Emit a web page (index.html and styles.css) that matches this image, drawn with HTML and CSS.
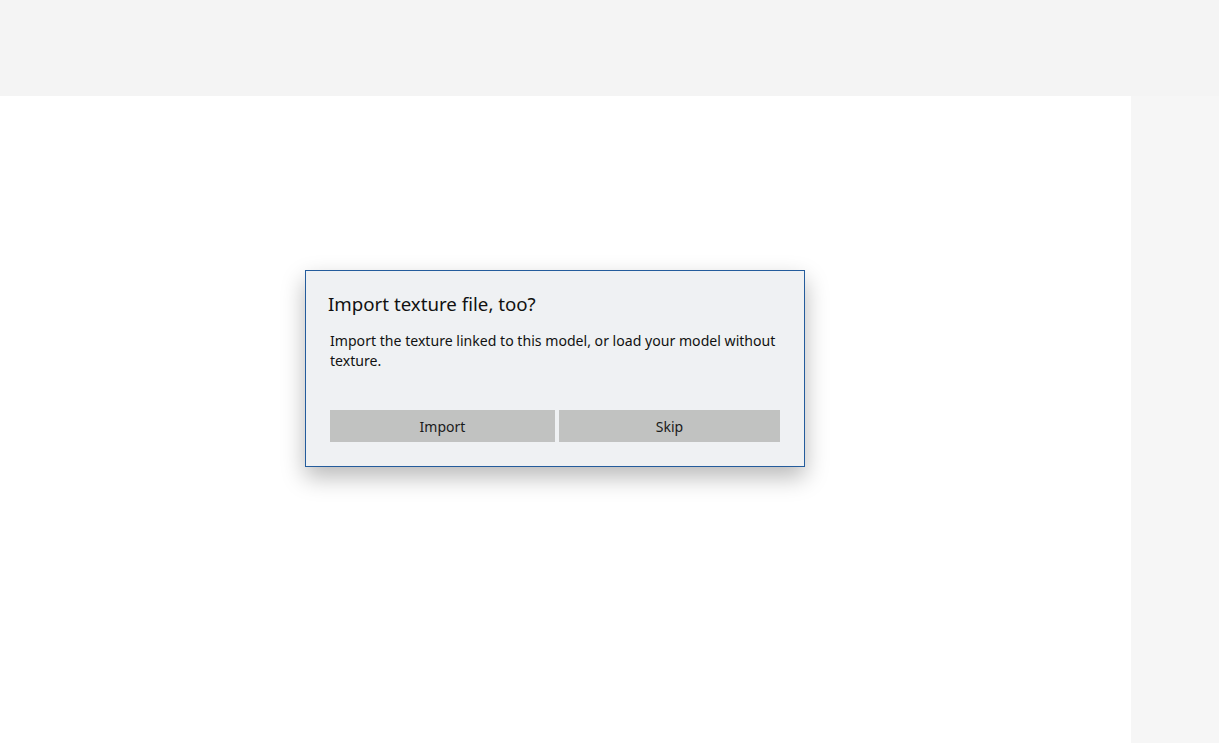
FILE: index.html
```html
<!DOCTYPE html>
<html>
<head>
<meta charset="utf-8">
<link rel="stylesheet" href="styles.css">
</head>
<body>
<div class="app">
  <div class="topbar"></div>
  <div class="main">
    <div class="canvas"></div>
    <div class="side"></div>
  </div>
</div>
<div class="dialog" role="dialog">
  <h1 class="title">Import texture file, too?</h1>
  <p class="message">Import the texture linked to this model, or load your model without texture.</p>
  <div class="actions">
    <button class="btn btn-import">Import</button>
    <button class="btn btn-skip">Skip</button>
  </div>
</div>
</body>
</html>
```
FILE: styles.css
```css
html, body {
  margin: 0;
  padding: 0;
  height: 100%;
  overflow: hidden;
}
body {
  font-family: "Noto Sans", "Open Sans", "DejaVu Sans", sans-serif;
  background: #f4f4f4;
}
.app {
  display: flex;
  flex-direction: column;
  height: 743px;
}
.topbar {
  height: 96px;
  background: #f4f4f4;
}
.main {
  flex: 1;
  display: flex;
}
.canvas {
  width: 1131px;
  background: #ffffff;
}
.side {
  flex: 1;
  background: #f6f6f6;
}
.dialog {
  position: absolute;
  left: 305px;
  top: 270px;
  width: 498px;
  height: 195px;
  box-sizing: content-box;
  border: 1px solid #245c9c;
  background: #eff1f3;
  box-shadow: 0 10px 22px rgba(0, 0, 0, 0.28);
  padding: 0;
}
.title {
  margin: 19px 0 0 22px;
  font-size: 18.7px;
  font-weight: 400;
  line-height: 28px;
  color: #111;
}
.message {
  margin: 13px 18px 0 24px;
  font-size: 14.1px;
  line-height: 20px;
  color: #111;
}
.actions {
  display: flex;
  gap: 4px;
  margin: 39px 24px 0 24px;
}
.btn {
  height: 32px;
  border: 0;
  background: #c1c2c1;
  font-family: inherit;
  font-size: 14px;
  color: #1a1a1a;
  padding: 0;
}
.btn-import {
  flex: 0 0 225px;
}
.btn-skip {
  flex: 0 0 221px;
}
```
